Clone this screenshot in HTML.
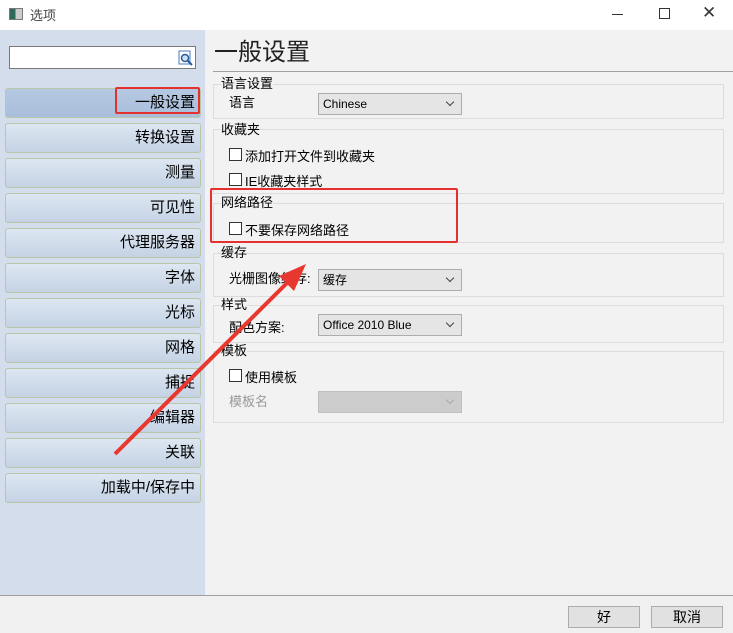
<!DOCTYPE html>
<html><head><meta charset="utf-8"><style>
*{margin:0;padding:0;box-sizing:border-box}
body{width:733px;height:633px;overflow:hidden;background:#f2f2f2;font-family:"Liberation Sans","Noto Sans CJK SC",sans-serif;font-size:13px;color:#000;position:relative}
.a{position:absolute}
.title{left:0;top:0;width:733px;height:30px;background:#fff}
.left{left:0;top:30px;width:205px;height:565px;background:#d3ddec}
.btn{position:absolute;left:5px;width:196px;height:30px;border:1px solid #b9c6a8;border-radius:3px;background:linear-gradient(#dde6f2,#cfdbea 60%,#c4d2e4);text-align:right;padding-right:5px;font-size:15px;line-height:28px}
.btn.sel{background:linear-gradient(#b6c9e2,#a9bedb);}
.grp{position:absolute;left:213px;width:511px;border:1px solid #dcdcdc}
.gl{position:absolute;font-size:13px;background:#f2f2f2;line-height:15px}
.cb{position:absolute;width:13px;height:13px;border:1px solid #333;background:#fff}
.dd{position:absolute;left:318px;width:144px;height:22px;border:1px solid #adadad;background:#e5e5e5;font-size:12px;line-height:20px;padding-left:4px}
.dd:after{content:"";position:absolute;right:8px;top:5px;width:5px;height:5px;border-right:1px solid #444;border-bottom:1px solid #444;transform:rotate(45deg)}
.dd.dis{background:#ccc;border-color:#bfbfbf}
.dd.dis:after{border-color:#aaa}
.ob{position:absolute;top:606px;width:72px;height:22px;border:1px solid #adadad;background:#e1e1e1;text-align:center;font-size:14px;line-height:20px}
</style></head><body>
<div class="a title"></div>
<div class="a" style="left:9px;top:8px;width:14px;height:12px;border:1px solid #777;background:linear-gradient(90deg,#2d6a5a 0 45%,#ccc 45%)"></div>
<div class="a" style="left:30px;top:5px;font-size:13px;color:#444">选项</div>
<div class="a" style="left:659px;top:8px;width:11px;height:11px;border:1px solid #333"></div>
<div class="a" style="left:702px;top:3px;font-size:17px;color:#333">✕</div>
<div class="a" style="left:612px;top:14px;width:11px;height:1px;background:#333"></div>
<div class="a left"></div>
<div class="a" style="left:9px;top:46px;width:187px;height:23px;border:1px solid #7a7a7a;background:#fff"></div>
<svg class="a" style="left:178px;top:50px" width="16" height="16"><rect x="1" y="1" width="11" height="13" fill="#fff" stroke="#4a7bb8"/><circle cx="7" cy="8" r="3.5" fill="#cfe3f7" stroke="#2b5a9a" stroke-width="1.5"/><line x1="9.5" y1="10.5" x2="14" y2="15" stroke="#2b5a9a" stroke-width="2"/></svg>
<div class="btn sel" style="top:88px">一般设置</div>
<div class="btn" style="top:123px">转换设置</div>
<div class="btn" style="top:158px">测量</div>
<div class="btn" style="top:193px">可见性</div>
<div class="btn" style="top:228px">代理服务器</div>
<div class="btn" style="top:263px">字体</div>
<div class="btn" style="top:298px">光标</div>
<div class="btn" style="top:333px">网格</div>
<div class="btn" style="top:368px">捕捉</div>
<div class="btn" style="top:403px">编辑器</div>
<div class="btn" style="top:438px">关联</div>
<div class="btn" style="top:473px">加载中/保存中</div>
<div class="a" style="left:115px;top:87px;width:85px;height:27px;border:2px solid #e53030;border-radius:2px"></div>

<div class="a" style="left:214px;top:38px;font-size:24px;line-height:30px;color:#222">一般设置</div>
<div class="a" style="left:213px;top:71px;width:520px;height:1px;background:#a0a0a0"></div>

<div class="grp" style="top:84px;height:35px"></div><div class="gl" style="left:221px;top:76px">语言设置</div>
<div class="a" style="left:229px;top:92px">语言</div>
<div class="dd" style="top:93px">Chinese</div>

<div class="grp" style="top:129px;height:65px"></div><div class="gl" style="left:221px;top:122px">收藏夹</div>
<div class="cb" style="left:229px;top:148px"></div><div class="a" style="left:245px;top:146px">添加打开文件到收藏夹</div>
<div class="cb" style="left:229px;top:173px"></div><div class="a" style="left:245px;top:171px">IE收藏夹样式</div>

<div class="grp" style="top:203px;height:40px"></div><div class="gl" style="left:221px;top:195px">网络路径</div>
<div class="cb" style="left:229px;top:222px"></div><div class="a" style="left:245px;top:220px">不要保存网络路径</div>
<div class="a" style="left:210px;top:188px;width:248px;height:55px;border:2px solid #e53030;border-radius:2px"></div>

<div class="grp" style="top:253px;height:44px"></div><div class="gl" style="left:221px;top:245px">缓存</div>
<div class="a" style="left:229px;top:268px">光栅图像缓存:</div>
<div class="dd" style="top:269px">缓存</div>

<div class="grp" style="top:305px;height:38px"></div><div class="gl" style="left:221px;top:297px">样式</div>
<div class="a" style="left:229px;top:317px">配色方案:</div>
<div class="dd" style="top:314px">Office 2010 Blue</div>

<div class="grp" style="top:351px;height:72px"></div><div class="gl" style="left:221px;top:343px">模板</div>
<div class="cb" style="left:229px;top:369px"></div><div class="a" style="left:245px;top:367px">使用模板</div>
<div class="a" style="left:229px;top:391px;color:#999">模板名</div>
<div class="dd dis" style="top:391px"></div>

<svg class="a" style="left:0;top:0" width="733" height="633"><line x1="115" y1="454" x2="288" y2="282" stroke="#e8372e" stroke-width="4"/><polygon points="306,264 279,276 294,291" fill="#e8372e"/></svg>

<div class="a" style="left:0;top:595px;width:733px;height:38px;background:#f0f0f0;border-top:1px solid #a0a0a0"></div>
<div class="ob" style="left:568px">好</div>
<div class="ob" style="left:651px">取消</div>
</body></html>
